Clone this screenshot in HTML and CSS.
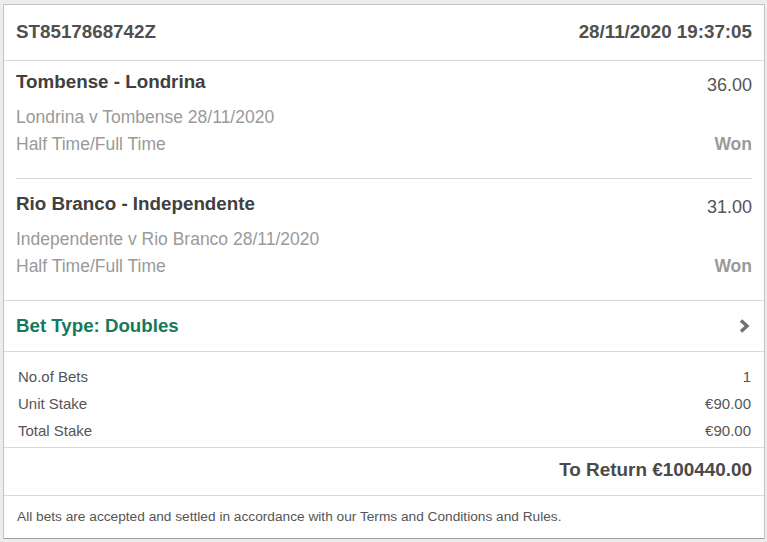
FILE: index.html
```html
<!DOCTYPE html>
<html lang="en">
<head>
  <meta charset="UTF-8">
  <meta name="viewport" content="width=device-width, initial-scale=1.0">
  <title>Bet Receipt</title>
  <link rel="stylesheet" href="styles.css">
</head>
<body>
  <div class="slip">
    <header class="slip-header">
      <span class="slip-ref">ST8517868742Z</span>
      <span class="slip-date">28/11/2020 19:37:05</span>
    </header>

    <section class="selections">
      <div class="selection">
        <div class="sel-title">Tombense - Londrina</div>
        <div class="sel-odds">36.00</div>
        <div class="sel-event">Londrina v Tombense 28/11/2020</div>
        <div class="sel-market">Half Time/Full Time</div>
        <div class="sel-result">Won</div>
      </div>
      <div class="selection">
        <div class="sel-title">Rio Branco - Independente</div>
        <div class="sel-odds">31.00</div>
        <div class="sel-event">Independente v Rio Branco 28/11/2020</div>
        <div class="sel-market">Half Time/Full Time</div>
        <div class="sel-result">Won</div>
      </div>
    </section>

    <div class="bet-type">
      <span>Bet Type: Doubles</span>
      <svg class="chevron" width="12" height="14" viewBox="0 0 12 14" aria-hidden="true">
        <polyline points="3,1.5 9,7 3,12.5" fill="none" stroke="#707070" stroke-width="3.4"/>
      </svg>
    </div>

    <section class="stakes">
      <div class="stake-row"><span>No.of Bets</span><span>1</span></div>
      <div class="stake-row"><span>Unit Stake</span><span>&euro;90.00</span></div>
      <div class="stake-row"><span>Total Stake</span><span>&euro;90.00</span></div>
    </section>

    <div class="to-return">To Return &euro;100440.00</div>

    <footer class="slip-footer">
      All bets are accepted and settled in accordance with our Terms and Conditions and Rules.
    </footer>
  </div>
</body>
</html>
```

FILE: styles.css
```css
* {
  box-sizing: border-box;
}

body {
  margin: 4px 2px 0 3px;
  background-color: #ececec;
  font-family: "Liberation Sans", Arial, sans-serif;
  color: #555;
}

.slip {
  background-color: #ffffff;
  border: 1px solid #c4c4c4;
  border-bottom-color: #9e9e9e;
  box-shadow: 0 1px 1px rgba(0, 0, 0, 0.12);
  height: 535px;
}

/* Cabeçalho */
.slip-header {
  display: flex;
  justify-content: space-between;
  align-items: center;
  height: 56px;
  padding: 0 12px 1px;
  border-bottom: 1px solid #d9d9d9;
  font-size: 18.8px;
  font-weight: bold;
  color: #505050;
}

/* Seleções */
.selections {
  padding: 0 12px;
  border-bottom: 1px solid #d9d9d9;
}

.selection {
  display: grid;
  grid-template-columns: 1fr auto;
  padding: 13px 0 20px;
  border-bottom: 1px solid #d9d9d9;
}

.selection:first-child {
  padding-top: 9px;
}

.selection:last-child {
  border-bottom: none;
}

.sel-title {
  font-size: 18.8px;
  font-weight: bold;
  line-height: 24px;
  color: #404040;
}

.sel-odds {
  font-size: 18px;
  line-height: 18px;
  padding-top: 6px;
  text-align: right;
  color: #555;
}

.sel-event,
.sel-market {
  grid-column: 1;
  font-size: 17.5px;
  line-height: 27px;
  color: #9a9a9a;
}

.sel-event {
  margin-top: 10px;
}

.sel-result {
  grid-column: 2;
  grid-row: 3;
  align-self: center;
  text-align: right;
  font-size: 17.5px;
  font-weight: bold;
  line-height: 27px;
  color: #9a9a9a;
}

/* Tipo de aposta */
.bet-type {
  display: flex;
  justify-content: space-between;
  align-items: center;
  height: 51px;
  padding: 0 12px 1px;
  border-bottom: 1px solid #d9d9d9;
  font-size: 18.7px;
  font-weight: bold;
  color: #157a5a;
}

.chevron {
  margin-right: 2px;
}

/* Valores */
.stakes {
  padding: 11px 13px 3px 14px;
  border-bottom: 1px solid #d9d9d9;
}

.stake-row {
  display: flex;
  justify-content: space-between;
  font-size: 15px;
  line-height: 27px;
  color: #555;
}

.to-return {
  display: flex;
  justify-content: flex-end;
  align-items: center;
  height: 48px;
  padding: 0 12px 3px;
  border-bottom: 1px solid #d9d9d9;
  font-size: 18.9px;
  font-weight: bold;
  color: #4a4a4a;
}

.slip-footer {
  padding: 12px 13px 0;
  font-size: 13.7px;
  line-height: 18px;
  color: #555;
}
```
